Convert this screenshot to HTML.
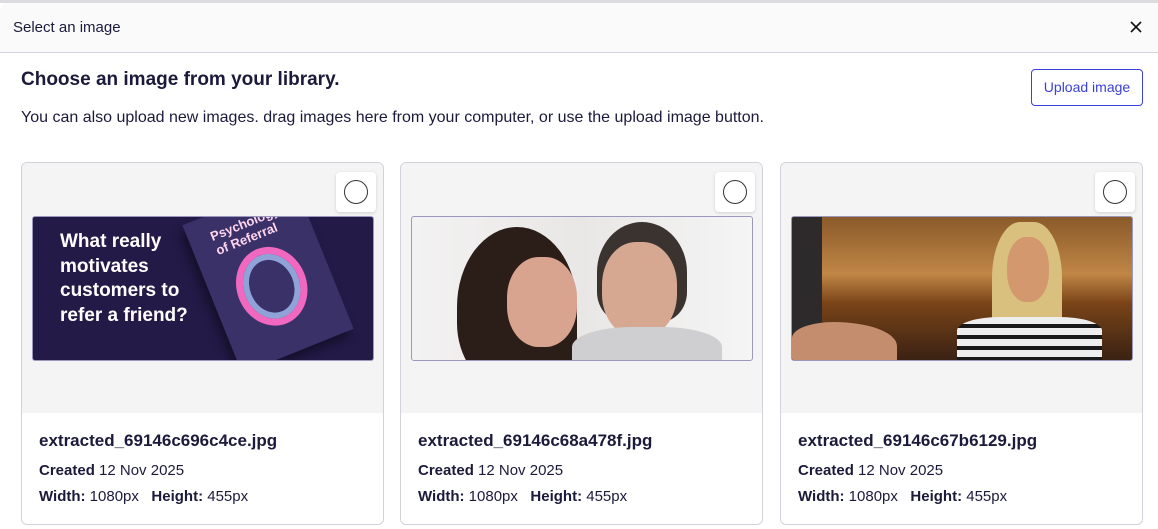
<!DOCTYPE html>
<html><head><meta charset="utf-8">
<style>
*{box-sizing:border-box;margin:0;padding:0}
body{width:1158px;height:529px;overflow:hidden;background:#fff;font-family:"Liberation Sans",Arial,sans-serif;color:#1c1a3b;position:relative}
.top{position:absolute;left:0;top:0;width:1158px;height:3px;background:#dcdce0}
.hdr{position:absolute;left:0;top:3px;width:1158px;height:50px;background:#fafafb;border-bottom:1px solid #d5d4de;border-top-left-radius:8px}
.hdr .t{position:absolute;left:13px;top:16px;font-size:15px;color:#1c1a3b}
.x{position:absolute;left:1129px;top:17px;width:14px;height:14px}
h1{position:absolute;left:21px;top:69px;font-size:19px;font-weight:bold;color:#1c1a3b}
.sub{position:absolute;left:21px;top:109px;font-size:16px;color:#1c1a3b}
.btn{position:absolute;left:1031px;top:69px;width:112px;height:37px;border:1px solid #3b3fdb;border-radius:4px;color:#3b3fdb;font-size:14px;text-align:center;line-height:35px}
.card{position:absolute;top:162px;width:363px;height:363px;border:1px solid #d3d2dc;border-radius:6px;overflow:hidden;background:#fff}
.gray{position:absolute;left:0;top:0;width:100%;height:250px;background:#f4f4f5}
.chk{position:absolute;left:314px;top:9px;width:40px;height:40px;background:#fff;border-radius:4px;box-shadow:0 1px 3px rgba(0,0,0,.15)}
.chk:after{content:"";position:absolute;left:8px;top:8px;width:22px;height:22px;border:1.3px solid #333;border-radius:50%}
.img{position:absolute;left:10px;top:53px;width:342px;height:145px;border:1px solid #9a98bc;border-radius:3px;overflow:hidden}
.name{position:absolute;left:17px;top:268px;font-size:17px;font-weight:bold;color:#1c1a3b}
.l1{position:absolute;left:17px;top:299px;font-size:15px}
.l2{position:absolute;left:17px;top:325px;font-size:15px}
b{font-weight:bold}
</style></head><body>
<div class="top"></div>
<div class="hdr"><div class="t">Select an image</div>
<svg class="x" viewBox="0 0 14 14"><path d="M2 2L12 12M12 2L2 12" stroke="#111" stroke-width="1.6"/></svg></div>
<h1>Choose an image from your library.</h1>
<div class="sub">You can also upload new images. drag images here from your computer, or use the upload image button.</div>
<div class="btn">Upload image</div>

<div class="card" style="left:21px">
<div class="gray"></div><div class="chk"></div>
<div class="img" style="background:#231a48">
<div style="position:absolute;left:27px;top:13px;color:#fff;font-weight:bold;font-size:19px;line-height:24.5px">What really<br>motivates<br>customers to<br>refer a friend?</div>
<div style="position:absolute;left:175px;top:-20px;width:120px;height:160px;background:#3a3168;transform:rotate(-22deg);box-shadow:-6px 6px 10px rgba(0,0,0,.4)">
<div style="position:absolute;left:22px;top:14px;color:#ffd5ee;font-weight:bold;font-size:13px;line-height:15px">Psychology<br>of Referral</div>
<div style="position:absolute;left:25px;top:50px;width:70px;height:80px;border:7px solid #f068c0;border-radius:50%;box-shadow:inset 0 0 0 6px #8fa3d8"></div>
</div></div>
<div class="name">extracted_69146c696c4ce.jpg</div>
<div class="l1"><b>Created</b> 12 Nov 2025</div>
<div class="l2"><b>Width:</b> 1080px &nbsp;&nbsp;<b>Height:</b> 455px</div>
</div>

<div class="card" style="left:400px">
<div class="gray"></div><div class="chk"></div>
<div class="img" style="background:linear-gradient(90deg,#f3f2f2,#e9e7e6 50%,#f5f5f5)">
<div style="position:absolute;left:45px;top:10px;width:120px;height:160px;background:#2b1d18;border-radius:50% 50% 20% 40%"></div>
<div style="position:absolute;left:95px;top:40px;width:70px;height:90px;background:#d9a48f;border-radius:45%"></div>
<div style="position:absolute;left:185px;top:5px;width:90px;height:100px;background:#3a3330;border-radius:50% 50% 30% 30%"></div>
<div style="position:absolute;left:190px;top:25px;width:75px;height:95px;background:#d6a891;border-radius:45%"></div>
<div style="position:absolute;left:160px;top:110px;width:150px;height:50px;background:#cfcfd2;border-radius:40% 40% 0 0"></div>
</div>
<div class="name">extracted_69146c68a478f.jpg</div>
<div class="l1"><b>Created</b> 12 Nov 2025</div>
<div class="l2"><b>Width:</b> 1080px &nbsp;&nbsp;<b>Height:</b> 455px</div>
</div>

<div class="card" style="left:780px">
<div class="gray"></div><div class="chk"></div>
<div class="img" style="left:10px;background:linear-gradient(180deg,#8a5a2a 0%,#c08646 40%,#7a4418 60%,#3a2214 100%)">
<div style="position:absolute;left:0;top:0;width:30px;height:145px;background:#2c2a2a"></div>
<div style="position:absolute;left:200px;top:5px;width:70px;height:140px;background:#d9c07e;border-radius:40% 40% 0 0"></div>
<div style="position:absolute;left:215px;top:20px;width:42px;height:65px;background:#d3986d;border-radius:45%"></div>
<div style="position:absolute;left:165px;top:100px;width:145px;height:45px;background:repeating-linear-gradient(180deg,#eee 0 7px,#1a1a1a 7px 11px);border-radius:30% 30% 0 0"></div>
<div style="position:absolute;left:0;top:105px;width:105px;height:40px;background:#c48e6e;border-radius:40% 60% 0 0"></div>
</div>
<div class="name">extracted_69146c67b6129.jpg</div>
<div class="l1"><b>Created</b> 12 Nov 2025</div>
<div class="l2"><b>Width:</b> 1080px &nbsp;&nbsp;<b>Height:</b> 455px</div>
</div>
</body></html>
